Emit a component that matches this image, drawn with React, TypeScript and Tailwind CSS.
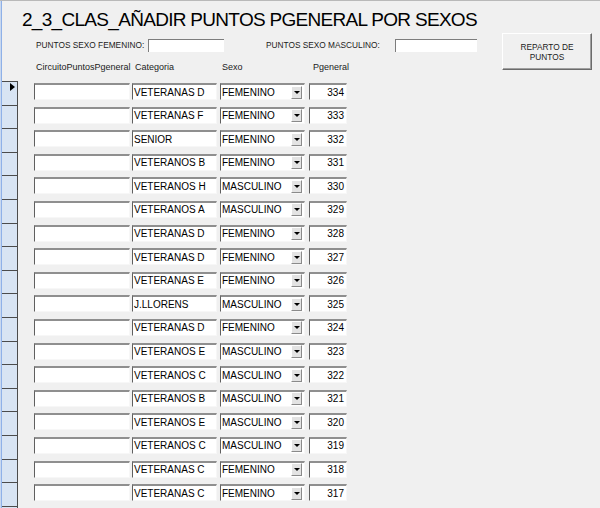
import React from "react";

interface Registro {
  categoria: string;
  sexo: string;
  puntos: string;
}

const registros: Registro[] = [
  { categoria: "VETERANAS D", sexo: "FEMENINO", puntos: "334" },
  { categoria: "VETERANAS F", sexo: "FEMENINO", puntos: "333" },
  { categoria: "SENIOR", sexo: "FEMENINO", puntos: "332" },
  { categoria: "VETERANOS B", sexo: "FEMENINO", puntos: "331" },
  { categoria: "VETERANOS H", sexo: "MASCULINO", puntos: "330" },
  { categoria: "VETERANOS A", sexo: "MASCULINO", puntos: "329" },
  { categoria: "VETERANAS D", sexo: "FEMENINO", puntos: "328" },
  { categoria: "VETERANAS D", sexo: "FEMENINO", puntos: "327" },
  { categoria: "VETERANAS E", sexo: "FEMENINO", puntos: "326" },
  { categoria: "J.LLORENS", sexo: "MASCULINO", puntos: "325" },
  { categoria: "VETERANAS D", sexo: "FEMENINO", puntos: "324" },
  { categoria: "VETERANOS E", sexo: "MASCULINO", puntos: "323" },
  { categoria: "VETERANOS C", sexo: "MASCULINO", puntos: "322" },
  { categoria: "VETERANOS B", sexo: "MASCULINO", puntos: "321" },
  { categoria: "VETERANOS E", sexo: "MASCULINO", puntos: "320" },
  { categoria: "VETERANOS C", sexo: "MASCULINO", puntos: "319" },
  { categoria: "VETERANAS C", sexo: "FEMENINO", puntos: "318" },
  { categoria: "VETERANAS C", sexo: "FEMENINO", puntos: "317" },
  { categoria: "", sexo: "", puntos: "" },
];

// campo hundido estilo formulario de Access
const campo =
  "h-[17px] mt-[2px] bg-white border-t-[2px] border-t-[#8f8f8f] border-l border-l-[#5f5f5f] border-r border-r-[#f7f7f7] border-b border-b-[#f7f7f7] flex items-center text-[10px] leading-[13px] text-black";

function Fila({ r, actual }: { r: Registro; actual: boolean }) {
  return (
    <div className="flex h-[23.6px] shrink-0">
      {/* selector de registro */}
      <div className="w-[16px] h-full shrink-0 bg-[#d8e4f3] border-t border-t-[#4b4b4b] border-r border-r-[#4b4b4b]">
        {actual && (
          <div className="ml-[8px] mt-[1px] w-0 h-0 border-l-[5px] border-l-black border-y-[4px] border-y-transparent" />
        )}
      </div>

      <div className={`${campo} ml-[16px] w-[96px]`} />
      <div className={`${campo} ml-[2px] w-[85px] pl-[1px]`}>{r.categoria}</div>
      <div className={`${campo} ml-[3px] w-[85px] pl-[1px] justify-between`}>
        <span>{r.sexo}</span>
        <div className="mr-[2px] w-[11px] h-[13px] bg-[#e3e3e3] border-t border-l border-t-white border-l-white border-r border-b border-r-[#8a8a8a] border-b-[#8a8a8a] flex items-center justify-center">
          <div className="w-0 h-0 border-x-[3px] border-x-transparent border-t-[3px] border-t-black" />
        </div>
      </div>
      <div className={`${campo} ml-[4px] w-[38px] justify-end pr-[2px]`}>{r.puntos}</div>
    </div>
  );
}

export default function App() {
  return (
    <div className="w-[600px] h-[508px] overflow-hidden bg-[#f0f0f0] flex border-t border-t-[#b9b9b9] font-['Liberation_Sans',Arial,sans-serif]">
      <div className="w-[1px] shrink-0 bg-[#c9d8ef]" />
      <div className="w-[1px] shrink-0 bg-[#8fb1e8]" />

      <div className="flex flex-col flex-1 min-w-0">
        {/* título */}
        <h1 className="pl-[20px] mt-[9px] text-[19px] leading-[19px] tracking-[-0.7px] text-black whitespace-nowrap">
          2_3_CLAS_AÑADIR PUNTOS PGENERAL POR SEXOS
        </h1>

        <div className="flex">
          <div className="flex flex-col w-[500px] shrink-0">
            {/* puntos por sexo */}
            <div className="flex items-center h-[13px] mt-[10px] pl-[34px] text-[8.3px] text-[#1b1b1b]">
              <span className="w-[112px] shrink-0">PUNTOS SEXO FEMENINO:</span>
              <div className="w-[76px] h-[13px] bg-white border-t border-l border-[#7d7d7d]" />
              <span className="ml-[42px] w-[129px] shrink-0">PUNTOS SEXO MASCULINO:</span>
              <div className="w-[82px] h-[13px] bg-white border-t border-l border-[#7d7d7d]" />
            </div>

            {/* cabeceras */}
            <div className="flex h-[13px] mt-[9px] pl-[34px] text-[9px] leading-[13px] text-[#1b1b1b]">
              <span className="w-[99px] shrink-0">CircuitoPuntosPgeneral</span>
              <span className="w-[87px] shrink-0">Categoria</span>
              <span className="w-[91px] shrink-0">Sexo</span>
              <span>Pgeneral</span>
            </div>
          </div>

          <button className="mt-[4px] w-[90px] h-[37px] shrink-0 bg-[#f0f0f0] border-t border-l border-t-white border-l-white border-r border-b border-r-[#6b6b6b] border-b-[#6b6b6b] shadow-[inset_-1px_-1px_0_#a0a0a0] text-[8.3px] leading-[10px] text-[#1b1b1b] flex flex-col items-center justify-center">
            <span>REPARTO DE</span>
            <span>PUNTOS</span>
          </button>
        </div>

        {/* registros */}
        <div className="flex flex-col mt-[7px]">
          {registros.map((r, i) => (
            <Fila key={i} r={r} actual={i === 0} />
          ))}
        </div>
      </div>
    </div>
  );
}
